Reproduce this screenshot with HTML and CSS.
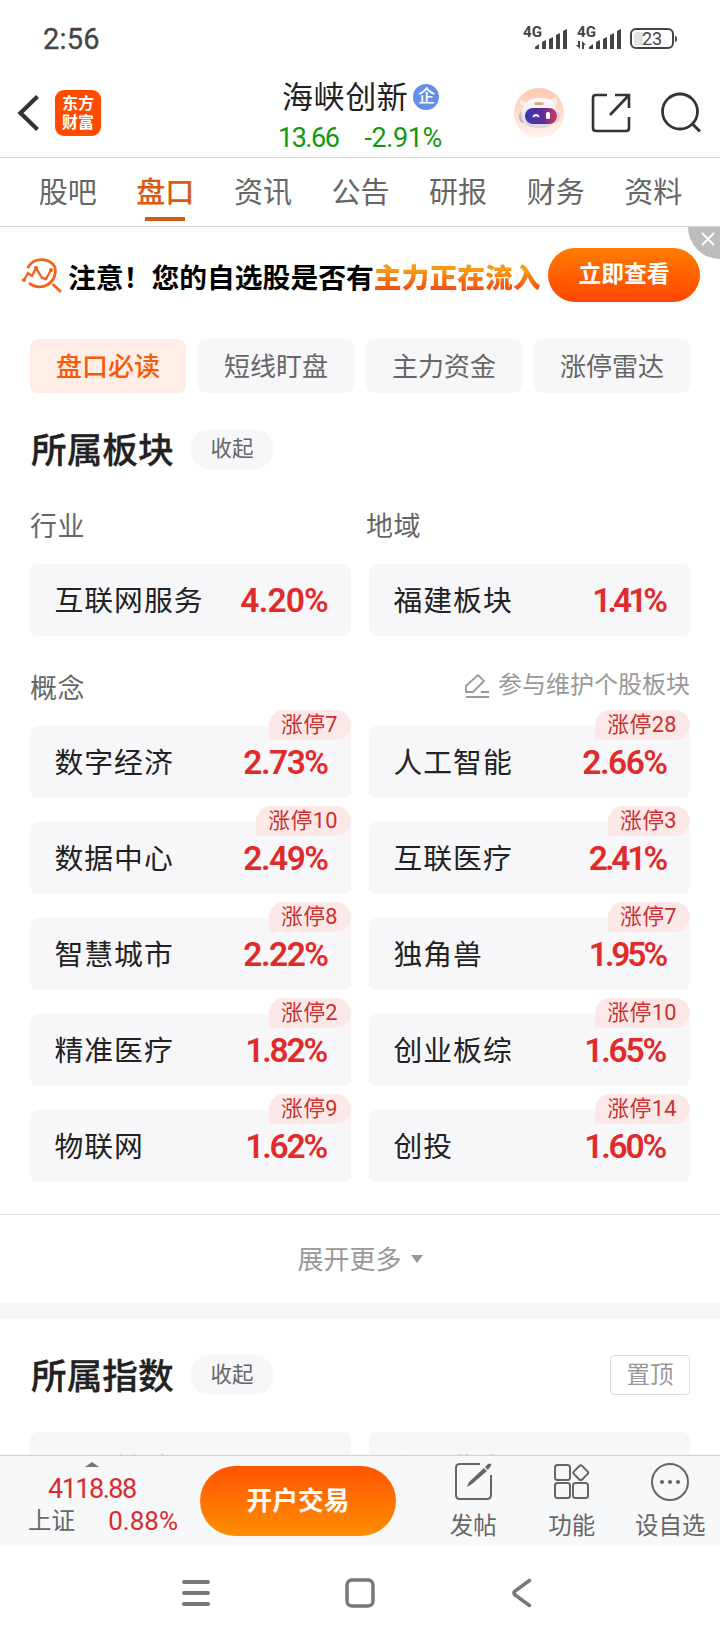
FILE: index.html
```html
<!DOCTYPE html>
<html lang="zh-CN">
<head>
<meta charset="utf-8">
<title>海峡创新 - 盘口</title>
<link rel="stylesheet" href="styles.css">
</head>
<body>
<div class="screen">

	<div class="status">
		<span class="clock">2:56</span>
		<svg class="status-icons" width="160" height="30" viewBox="0 0 160 30">
			<g fill="#444" class="net">
				<text x="3" y="12" textLength="19" lengthAdjust="spacingAndGlyphs">4G</text>
				<path d="M15 22l4-3v5h-4zM22 17l4-2v9h-4zM29 14l4-2v12h-4zM36 10l4-2v16h-4zM43 6l4-2v20h-4z"/>
				<text x="57" y="12" textLength="19" lengthAdjust="spacingAndGlyphs">4G</text>
				<path d="M69 22l4-3v5h-4zM76 17l4-2v9h-4zM83 14l4-2v12h-4zM90 10l4-2v16h-4zM97 6l4-2v20h-4z"/>
				<path d="M58 16h2v8l-4-4h2zM62 24v-8l4 4h-2v4z"/>
			</g>
			<rect x="114" y="7" width="9" height="14" rx="3" fill="#e2e2e2"/>
			<rect x="111" y="4" width="42" height="19" rx="5" fill="none" stroke="#444" stroke-width="2"/>
			<path d="M155 11q2 0 2 3t-2 3z" fill="#444"/>
			<text x="122" y="20" class="batt" textLength="20">23</text>
		</svg>
	</div>

	<div class="header">
		<svg class="back" width="24" height="38" viewBox="0 0 24 38"><path d="M21.500 2.500L4.500 19l17 16.500" fill="none" stroke="#333" stroke-width="4.200"/></svg>
		<div class="logo"><span>东方</span><span>财富</span></div>
		<div class="stock">
			<div class="name">海峡创新<i>企</i></div>
			<div class="price"><span>13.66</span><span class="chg">-2.91%</span></div>
		</div>
		<svg class="robot" width="50" height="50" viewBox="0 0 50 50">
			<defs>
				<linearGradient id="rb" x1="0" y1="0" x2="0" y2="1"><stop offset="0" stop-color="#ffc7ae"/><stop offset="1" stop-color="#fff5f0"/></linearGradient>
				<linearGradient id="rv" x1="0" y1="0" x2="1" y2="0"><stop offset="0" stop-color="#3f35b5"/><stop offset=".55" stop-color="#5b2c97"/><stop offset="1" stop-color="#d8365c"/></linearGradient>
				<linearGradient id="rh" x1="0" y1="0" x2="0" y2="1"><stop offset="0" stop-color="#fff"/><stop offset="1" stop-color="#d9d4d8"/></linearGradient>
			</defs>
			<circle cx="25" cy="25" r="25" fill="url(#rb)"/>
			<path d="M11 18Q4 18 6 11q3 5 10 2zM33 12q8-1 9-4 3 7-4 12z" fill="#f4eeee"/>
			<ellipse cx="9" cy="29" rx="4" ry="6" fill="#b9b6be"/><ellipse cx="42" cy="29" rx="4" ry="6" fill="#d9d6de"/>
			<path d="M7 26Q9 10 26 10t17 16q0 14-18 14T7 26z" fill="url(#rh)"/>
			<path d="M20 15q5-2 10 0l-1 2h-8z" fill="#dba873"/>
			<rect x="11" y="20" width="32" height="16" rx="8" fill="url(#rv)"/>
			<path d="M19 29q3-4 6 0" fill="none" stroke="#fff" stroke-width="2"/>
			<rect x="32" y="24" width="4" height="7" rx="1.500" fill="#fff"/>
		</svg>
		<svg class="share" width="40" height="40" viewBox="0 0 40 40"><path d="M16 2H5Q2 2 2 5v30q0 3 3 3h30q3 0 3-3V24M24 2h14v13M38 2L19 22" fill="none" stroke="#333" stroke-width="2.600"/></svg>
		<svg class="search" width="42" height="42" viewBox="0 0 42 42"><circle cx="20" cy="19.500" r="17.500" fill="none" stroke="#333" stroke-width="2.800"/><path d="M31.500 31l8.500 8.500" stroke="#333" stroke-width="3"/></svg>
	</div>

	<div class="tabs">
		<span>股吧</span>
		<span class="on">盘口</span>
		<span>资讯</span>
		<span>公告</span>
		<span>研报</span>
		<span>财务</span>
		<span>资料</span>
	</div>

	<div class="content">
		<div class="banner">
			<svg class="scan" width="42" height="40" viewBox="0 0 42 40" fill="none" stroke="#f0641e" stroke-width="2.800">
				<path d="M5.500 13A16 16 0 0 1 33 12A16 16 0 0 1 7 28M30.500 29l8.500 8"/>
				<path d="M2 25l4-7 4 3 4-8 6 10 4 1 5-9" stroke-width="2.400"/>
				<g fill="#f0641e" stroke="none"><circle cx="2" cy="25" r="2"/><circle cx="14" cy="13" r="2"/><circle cx="29" cy="15" r="2"/></g>
			</svg>
			<span class="warn">注意！您的自选股是否有<b>主力正在流入</b></span>
			<span class="look">立即查看</span>
			<div class="close"><svg width="14" height="14" viewBox="0 0 14 14"><path d="M1 1l12 12M13 1L1 13" stroke="#fff" stroke-width="1.800"/></svg></div>
		</div>

		<div class="chips">
			<span class="on">盘口必读</span>
			<span>短线盯盘</span>
			<span>主力资金</span>
			<span>涨停雷达</span>
		</div>

		<div class="title">
			<h2>所属板块</h2><span class="fold">收起</span>
		</div>

		<div class="labels"><span>行业</span><span>地域</span></div>
		<div class="cards">
			<div class="card">互联网服务<b>4.20%</b></div>
			<div class="card">福建板块<b class="n4">1.41%</b></div>
		</div>

		<div class="labels concept">
			<span>概念</span>
			<span class="edit"><svg width="26" height="26" viewBox="0 0 26 26"><path d="M2 19v-6L14 2l6 6-11 11H2zM17 19h8M2 24h23" fill="none" stroke="#999" stroke-width="1.800"/></svg>参与维护个股板块</span>
		</div>
		<div class="cards">
			<div class="card">数字经济<b class="n1">2.73%</b><em>涨停7</em></div>
			<div class="card">人工智能<b class="n1">2.66%</b><em>涨停28</em></div>
			<div class="card">数据中心<b class="n1">2.49%</b><em>涨停10</em></div>
			<div class="card">互联医疗<b class="n3">2.41%</b><em>涨停3</em></div>
			<div class="card">智慧城市<b class="n1">2.22%</b><em>涨停8</em></div>
			<div class="card">独角兽<b class="n3">1.95%</b><em>涨停7</em></div>
			<div class="card">精准医疗<b class="n2">1.82%</b><em>涨停2</em></div>
			<div class="card">创业板综<b class="n2">1.65%</b><em>涨停10</em></div>
			<div class="card">物联网<b class="n2">1.62%</b><em>涨停9</em></div>
			<div class="card">创投<b class="n2">1.60%</b><em>涨停14</em></div>
		</div>

		<div class="more"><span>展开更多</span><i></i></div>

		<div class="title index">
			<h2>所属指数</h2><span class="fold">收起</span><span class="top">置顶</span>
		</div>
		<div class="cards below">
			<div class="card">深证转债</div>
			<div class="card">创业指数</div>
		</div>
	</div>

	<div class="toolbar">
		<div class="quote">
			<i></i>
			<div class="point">4118.88</div>
			<div class="row"><span>上证</span><b>0.88%</b></div>
		</div>
		<div class="trade">开户交易</div>
		<div class="tool">
			<svg width="40" height="40" viewBox="0 0 40 40"><path d="M27 3H7Q3 3 3 7v27q0 4 4 4h27q4 0 4-4V14" fill="none" stroke="#666" stroke-width="2"/><path d="M14 26l2-5L31 7l3 3-15 13zM32 6l3-3q2-1 3 0 1 2-1 3l-2 3z" fill="#666"/></svg>
			<span>发帖</span>
		</div>
		<div class="tool">
			<svg width="40" height="40" viewBox="0 0 40 40" fill="none" stroke="#666" stroke-width="2"><rect x="3" y="4" width="15" height="15" rx="2.500"/><rect x="3" y="22" width="15" height="15" rx="2.500"/><rect x="21" y="22" width="15" height="15" rx="2.500"/><rect x="23" y="6" width="11.500" height="11.500" rx="2" transform="rotate(45 28.750 11.750)"/></svg>
			<span>功能</span>
		</div>
		<div class="tool">
			<svg width="40" height="40" viewBox="0 0 40 40"><circle cx="20" cy="21" r="18" fill="none" stroke="#666" stroke-width="2"/><g fill="#666"><circle cx="12" cy="21" r="2"/><circle cx="20" cy="21" r="2"/><circle cx="28" cy="21" r="2"/></g></svg>
			<span>设自选</span>
		</div>
	</div>

	<div class="nav">
		<svg width="30" height="30" viewBox="0 0 30 30"><path d="M3 4h24M3 15h24M3 26h24" stroke="#777" stroke-width="4" stroke-linecap="round"/></svg>
		<svg width="30" height="30" viewBox="0 0 30 30"><rect x="2" y="2" width="26" height="26" rx="5" fill="none" stroke="#777" stroke-width="3.500"/></svg>
		<svg width="30" height="30" viewBox="0 0 30 30"><path d="M20.500 2.500L6 13q-2 2 0 4l14.500 10.500" fill="none" stroke="#777" stroke-width="3.500" stroke-linecap="round"/></svg>
	</div>
</div>
</body>
</html>
```
FILE: styles.css
```css
* {
	box-sizing: border-box;
}
body {
	margin: 0;
	background: #fff;
	color: #222;
	font-family: Roboto, "Noto Sans CJK SC", sans-serif;
}
svg {
	display: block;
	flex: none;
	overflow: visible;
}
i, em {
	font-style: normal;
}
.screen {
	width: 720px;
	height: 1640px;
	overflow: hidden;
	display: flex;
	flex-direction: column;
}

/* status bar */
.status {
	height: 72px;
	flex: none;
	display: flex;
	justify-content: space-between;
	padding: 25px 40px 0 43px;
}
.clock {
	font-size: 29px;
	line-height: 29px;
	letter-spacing: 0.2px;
	color: #444;
	-webkit-text-stroke: 0.3px #444;
}
.net {
	font-size: 15.500px;
	font-weight: 700;
}
.batt {
	font-size: 18px;
	fill: #444;
}

/* header */
.header {
	height: 86px;
	flex: none;
	display: flex;
	border-bottom: 1px solid #d6d6d6;
}
.back {
	margin: 22px 0 0 16px;
}
.logo {
	width: 46px;
	height: 46px;
	margin: 18px 0 0 15px;
	padding-top: 4px;
	border-radius: 9px;
	background: #ff4a00;
	color: #fff;
	font-size: 16px;
	font-weight: 700;
	line-height: 19px;
	text-align: center;
}
.logo span {
	display: block;
}
.stock {
	width: 166px;
	margin-left: 176px;
}
.name {
	display: flex;
	align-items: center;
	height: 50px;
	padding: 0 0 5px 5px;
	font-size: 31px;
	letter-spacing: 0.6px;
	white-space: nowrap;
}
.name i {
	width: 26px;
	height: 26px;
	margin: 4px 0 0 5px;
	border-radius: 50%;
	background: #648fe8;
	color: #fff;
	font-size: 17px;
	font-weight: 500;
	line-height: 25px;
	text-align: center;
	letter-spacing: 0;
	flex: none;
}
.price {
	display: flex;
	justify-content: space-between;
	font-size: 27px;
	line-height: 32px;
	letter-spacing: -1.500px;
	padding: 0 1px 0 1px;
	color: #119911;
}
.chg {
	letter-spacing: -0.400px;
}
.robot {
	margin: 16px 0 0 71px;
}
.share {
	margin: 21px 0 0 27px;
}
.search {
	margin: 20px 0 0 29px;
}

/* tabs */
.tabs {
	height: 69px;
	flex: none;
	display: flex;
	padding: 0 18px 0 19px;
	border-bottom: 1px solid #d6d6d6;
	font-size: 29px;
	line-height: 70px;
	color: #666;
}
.tabs span {
	flex: 1;
	height: 68px;
	text-align: center;
	white-space: nowrap;
}
.tabs .on {
	color: #d95a13;
	font-weight: 500;
	background: linear-gradient(#d0591c, #d0591c) no-repeat 50% 59px / 40px 4px;
}

/* content */
.content {
	height: 1228px;
	flex: none;
	overflow: hidden;
}
.banner {
	position: relative;
	height: 112px;
	display: flex;
	padding-left: 22px;
}
.scan {
	margin-top: 28px;
}
.warn {
	width: 480px;
	margin-left: 4px;
	font-size: 27.800px;
	font-weight: 700;
	line-height: 104px;
	white-space: nowrap;
	color: #000;
}
.warn b {
	background: linear-gradient(#f89a14 25%, #f4520e 80%);
	-webkit-background-clip: text;
	background-clip: text;
	color: transparent;
}
.look {
	width: 152px;
	height: 54px;
	margin-top: 21px;
	border-radius: 27px;
	background: linear-gradient(#ff7d00, #ff4500);
	color: #fff;
	font-size: 22.800px;
	font-weight: 700;
	line-height: 53px;
	text-align: center;
}
.close {
	position: absolute;
	right: 0;
	top: 0;
	width: 32px;
	height: 32px;
	padding: 5px 0 0 13px;
	border-bottom-left-radius: 32px;
	background: #bdbdbd;
}
.chips {
	display: flex;
	gap: 12px;
	padding: 0 30px;
}
.chips span {
	width: 156px;
	height: 54px;
	border-radius: 8px;
	background: #f7f7fa;
	color: #666;
	font-size: 26px;
	line-height: 56px;
	text-align: center;
}
.chips .on {
	background: #ffede6;
	color: #f55b0a;
	font-weight: 500;
}
.title {
	display: flex;
	align-items: center;
	height: 40px;
	margin-top: 36px;
	padding: 0 30px;
}
.title h2 {
	margin: 0;
	width: 160px;
	padding: 3px 0 0 1px;
	font-size: 35.700px;
	font-weight: 500;
	line-height: 44px;
	-webkit-text-stroke: 0.3px #222;
}
.fold {
	flex: none;
	width: 84px;
	height: 40px;
	border-radius: 20px;
	background: #f7f7fa;
	color: #666;
	font-size: 21.500px;
	line-height: 40px;
	text-align: center;
}
.top {
	width: 80px;
	height: 40px;
	margin-left: auto;
	border: 1px solid #ddd;
	border-radius: 4px;
	color: #999;
	font-size: 23.500px;
	line-height: 39px;
	text-align: center;
}
.labels {
	display: flex;
	height: 40px;
	margin: 36px 30px 19px;
	color: #666;
	font-size: 27px;
	line-height: 45px;
	letter-spacing: 0.500px;
}
.labels span {
	width: 336px;
	flex: none;
}
.labels.concept {
	margin: 31px 30px 19px;
	justify-content: space-between;
}
.labels .edit {
	width: auto;
	display: flex;
	align-items: center;
	gap: 8px;
	color: #999;
	font-size: 24px;
	line-height: 37px;
	height: 37px;
	letter-spacing: 0;
}
.cards {
	display: grid;
	grid-template-columns: 321px 321px;
	gap: 24px 18px;
	padding: 0 30px;
}
.card {
	position: relative;
	height: 72px;
	display: flex;
	justify-content: space-between;
	padding: 0 23px 0 24.500px;
	border-radius: 8px;
	background: #f7f7fa;
	font-size: 28.800px;
	line-height: 75px;
	letter-spacing: 1px;
	white-space: nowrap;
}
.card b {
	color: #e12a2a;
	font-size: 33.500px;
	font-weight: 600;
	line-height: 73px;
	letter-spacing: -0.800px;
}
.card .n1 {
	letter-spacing: -1.500px;
	margin-right: 0.5px;
}
.card .n2 {
	letter-spacing: -2.200px;
	margin-right: 2px;
}
.card .n3 {
	letter-spacing: -3.100px;
	margin-right: 2px;
}
.card .n4 {
	letter-spacing: -4px;
	margin-right: 3px;
}
.card em {
	position: absolute;
	right: 0;
	top: -16px;
	height: 30px;
	padding: 0 13px 0 12px;
	border-radius: 15px 15px 15px 0;
	background: #fde8e8;
	color: #c9302f;
	font-size: 21.800px;
	line-height: 30px;
	letter-spacing: 0.400px;
}
.more {
	display: flex;
	justify-content: center;
	height: 105px;
	margin-top: 32px;
	border-top: 1px solid #e2e2e2;
	border-bottom: 16px solid #f7f7fa;
	color: #999;
	font-size: 26px;
	line-height: 90px;
}
.more i {
	height: 8px;
	margin: 40px 0 0 9px;
	border: 6px solid transparent;
	border-top: 8px solid #999;
	border-bottom: 0;
}
.title.index {
	margin-bottom: 37px;
}
.below .card {
	line-height: 75px;
}

/* bottom toolbar */
.toolbar {
	height: 91px;
	flex: none;
	display: flex;
	border-top: 1px solid #d0d0d0;
	background: #f7f8fa;
}
.quote {
	width: 200px;
	padding: 6px 22px 0 28px;
	color: #d92b2b;
}
.quote i {
	display: block;
	width: 14px;
	margin-left: 57px;
	border: 7px solid transparent;
	border-bottom: 5px solid #777;
	border-top: 0;
}
.point {
	padding-left: 20px;
	font-size: 27px;
	line-height: 44px;
	letter-spacing: -1.500px;
}
.row {
	display: flex;
	justify-content: space-between;
	font-size: 26px;
	line-height: 21px;
}
.row span {
	color: #666;
	font-size: 23.500px;
	line-height: 20px;
}
.row b {
	font-weight: 400;
	letter-spacing: 0;
}
.trade {
	width: 196px;
	height: 70px;
	margin: 10px 28px 0 0;
	border-radius: 35px;
	background: linear-gradient(#ff5500, #ff8e00);
	color: #fff;
	font-size: 25.800px;
	font-weight: 700;
	line-height: 71px;
	text-align: center;
}
.tool {
	display: flex;
	flex-direction: column;
	align-items: center;
	width: 98.500px;
	padding-top: 5px;
	flex: none;
	color: #666;
	font-size: 23.500px;
	line-height: 51px;
}

/* system navigation */
.nav {
	flex: 1;
	display: flex;
	justify-content: space-between;
	padding: 32px 181px 0;
}
```
